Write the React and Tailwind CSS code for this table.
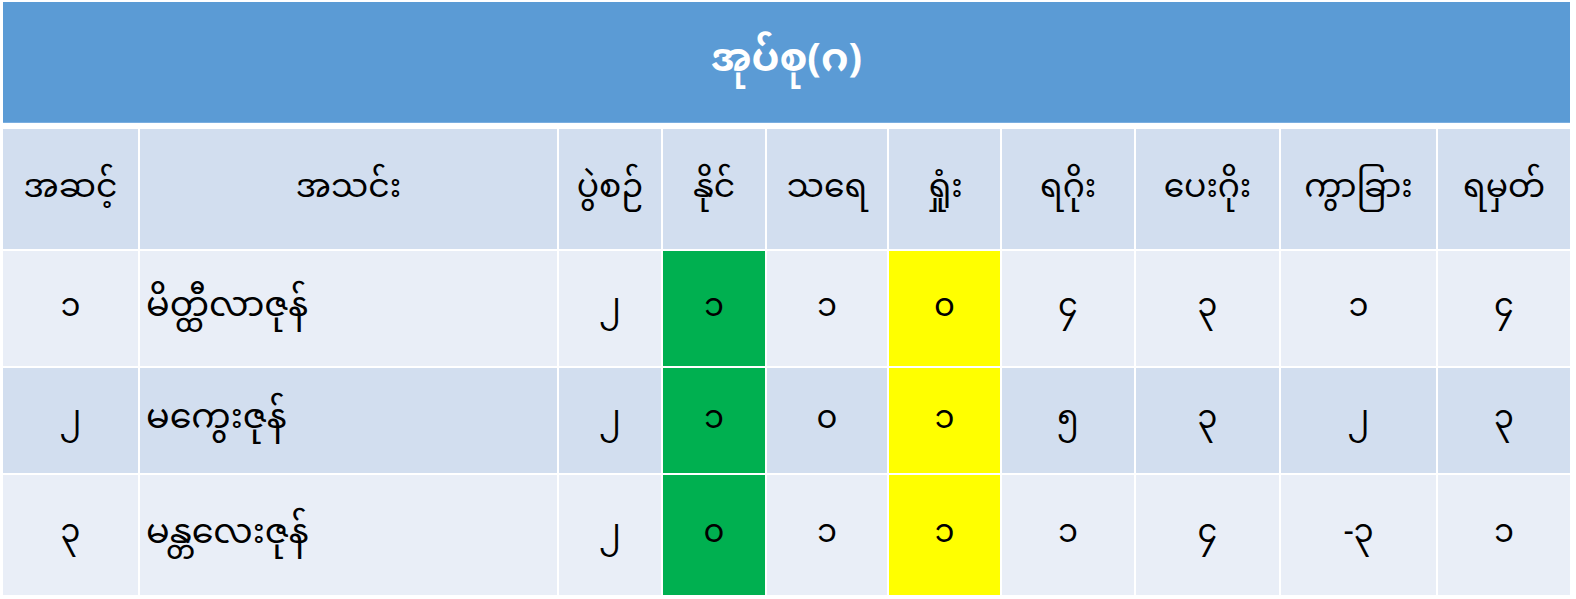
import React from 'react';

const cols = [
    { key: 'rank', label: 'အဆင့်' },
    { key: 'team', label: 'အသင်း' },
    { key: 'played', label: 'ပွဲစဉ်' },
    { key: 'won', label: 'နိုင်' },
    { key: 'drawn', label: 'သရေ' },
    { key: 'lost', label: 'ရှုံး' },
    { key: 'gf', label: 'ရဂိုး' },
    { key: 'ga', label: 'ပေးဂိုး' },
    { key: 'gd', label: 'ကွာခြား' },
    { key: 'pts', label: 'ရမှတ်' },
];

const rows = [
    { rank: '၁', team: 'မိတ္ထီလာဇုန်', played: '၂', won: '၁', drawn: '၁', lost: '၀', gf: '၄', ga: '၃', gd: '၁', pts: '၄' },
    { rank: '၂', team: 'မကွေးဇုန်', played: '၂', won: '၁', drawn: '၀', lost: '၁', gf: '၅', ga: '၃', gd: '၂', pts: '၃' },
    { rank: '၃', team: 'မန္တလေးဇုန်', played: '၂', won: '၀', drawn: '၁', lost: '၁', gf: '၁', ga: '၄', gd: '-၃', pts: '၁' },
];

const rowHeights = ['h-[115px]', 'h-[105px]', 'h-[120px]'];

export default function App() {
    return (
        <div
            className="bg-white w-[1576px] h-[599px] pt-[2px] pl-[3px] text-black"
            style={{ fontFamily: '"Noto Sans Myanmar", "Myanmar Text", Padauk, "Noto Sans", "DejaVu Sans", sans-serif' }}
        >
            <div className="w-[1567px]">
                {/* title bar */}
                <div className="h-[121px] bg-[#5b9bd5] flex items-center justify-center border-b border-[#7aaee0]">
                    <span className="text-white font-bold text-[40px] leading-none">အုပ်စု(ဂ)</span>
                </div>

                <div className="mt-[6px] grid grid-cols-[135px_417px_102px_102px_120px_111px_132px_143px_155px_132px] gap-[2px] bg-white">
                    {/* header */}
                    {cols.map((c) => (
                        <div key={c.key} className="h-[120px] bg-[#d2deef] flex items-center justify-center text-[33px] leading-none whitespace-nowrap">
                            {c.label}
                        </div>
                    ))}

                    {/* rows */}
                    {rows.map((r, i) => (
                        <React.Fragment key={i}>
                            {cols.map((c) => {
                                let bg = i % 2 === 0 ? 'bg-[#e9eef7]' : 'bg-[#d2deef]';
                                if (c.key === 'won') bg = 'bg-[#00b050]';
                                if (c.key === 'lost') bg = 'bg-[#ffff00]';
                                const isTeam = c.key === 'team';
                                return (
                                    <div
                                        key={c.key}
                                        className={`${rowHeights[i]} ${bg} flex items-center leading-none whitespace-nowrap ${isTeam ? 'justify-start pl-[6px] text-[35px]' : 'justify-center text-[32px]'}`}
                                    >
                                        {r[c.key]}
                                    </div>
                                );
                            })}
                        </React.Fragment>
                    ))}
                </div>
            </div>
        </div>
    );
}
